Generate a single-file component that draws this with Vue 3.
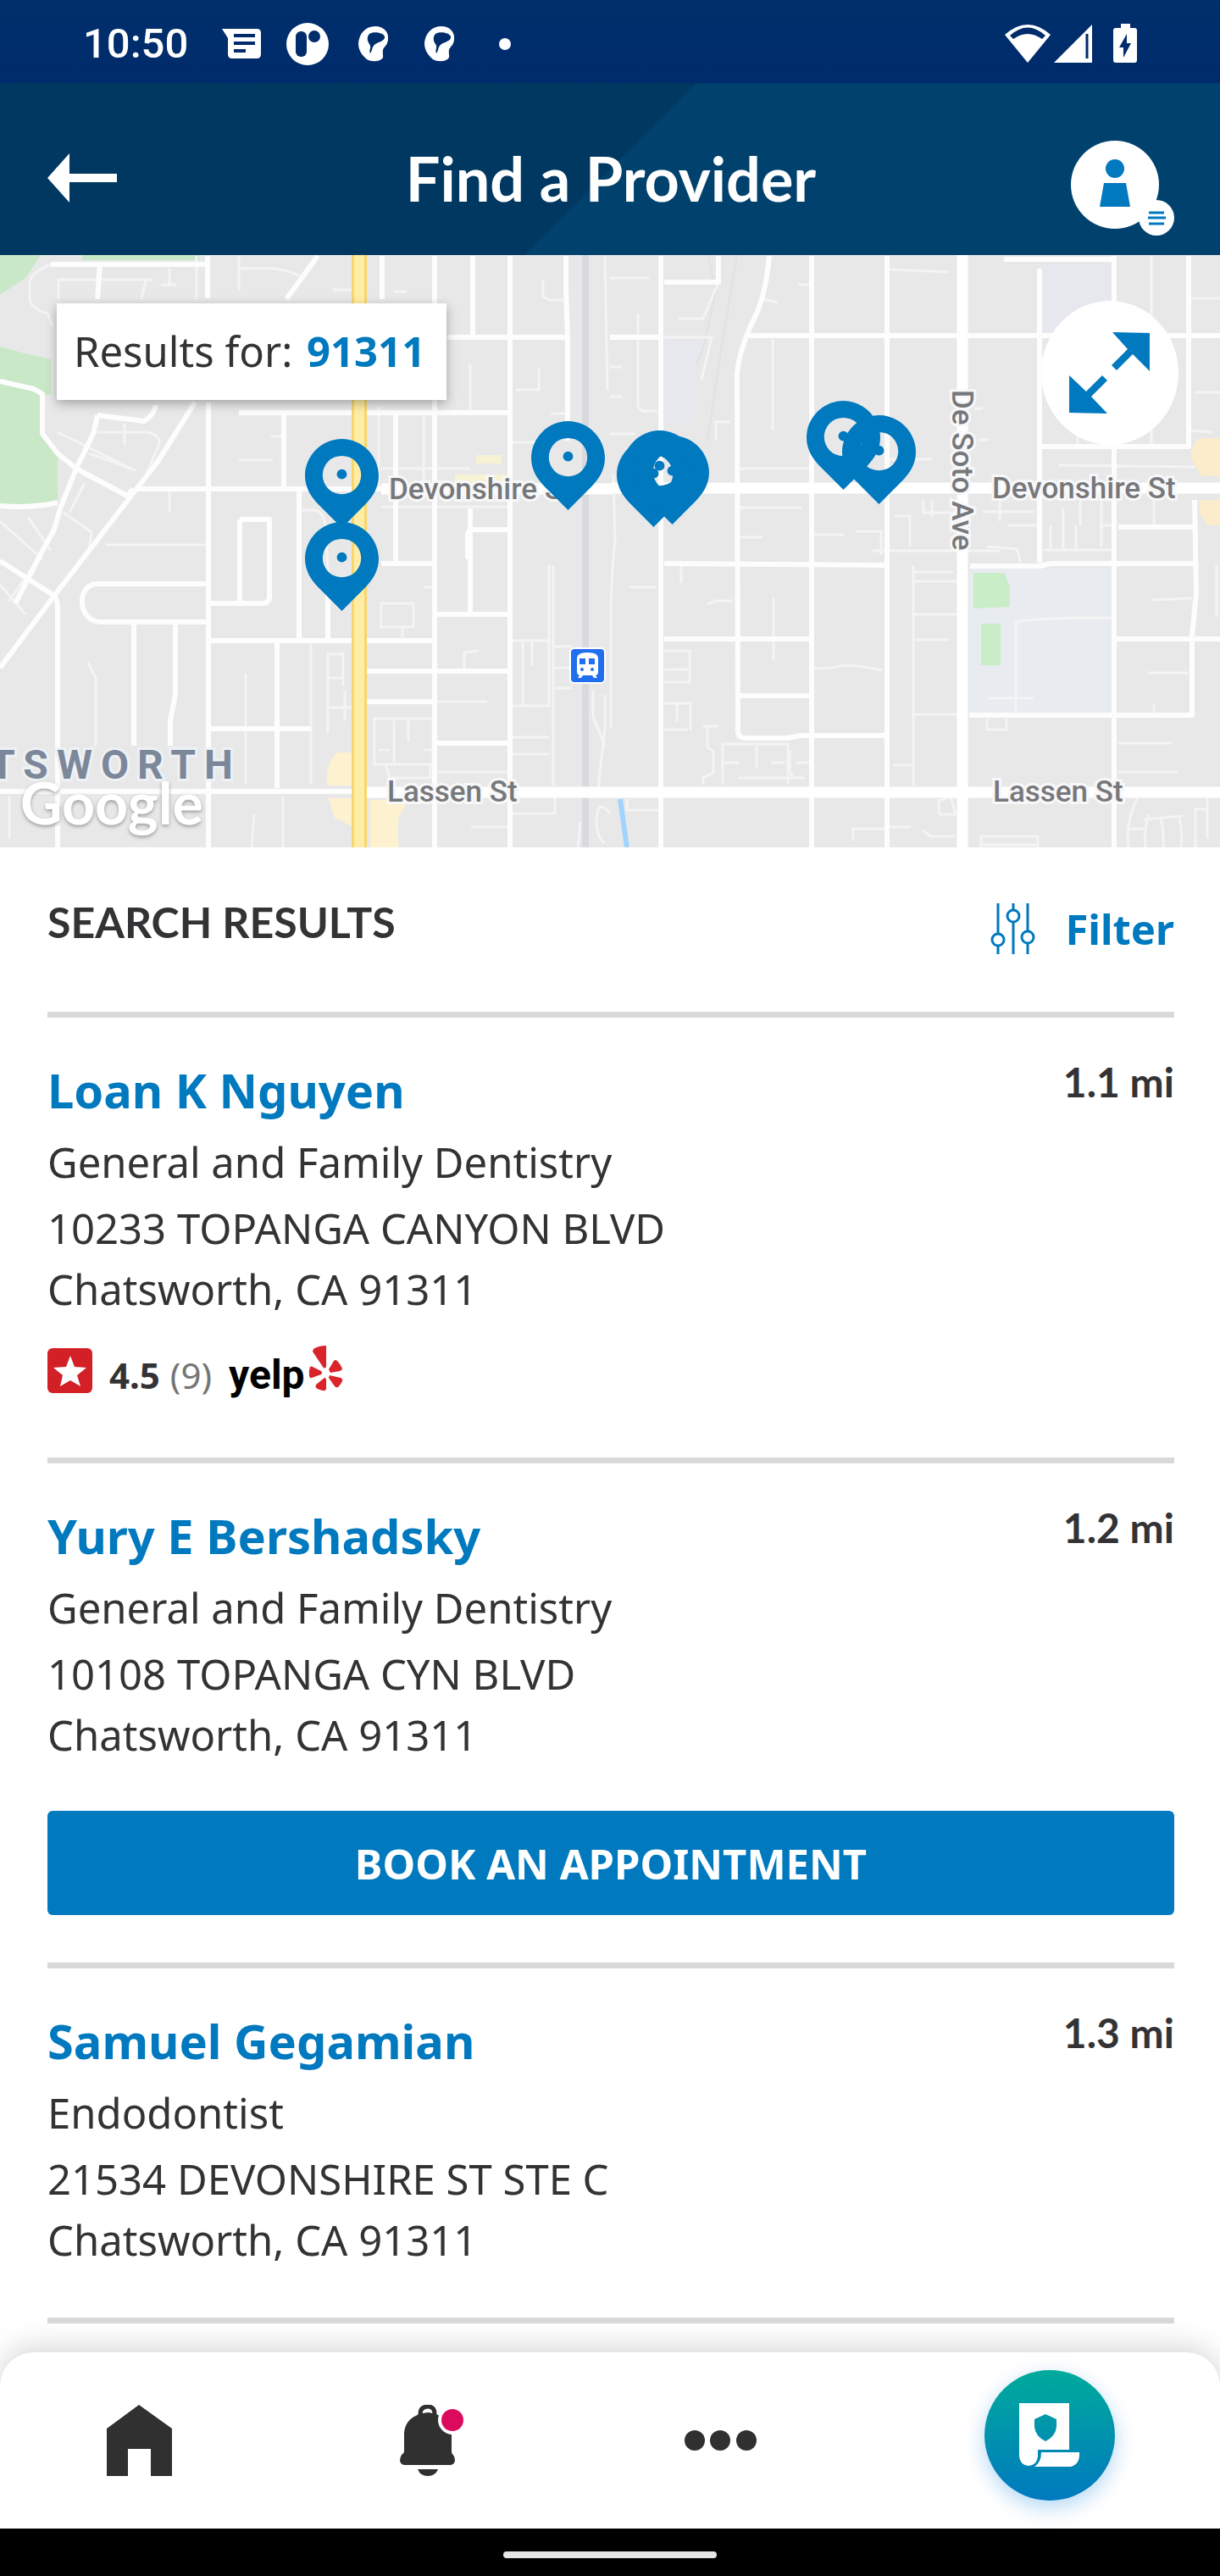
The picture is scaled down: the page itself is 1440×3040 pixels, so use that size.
<script setup>
import { ref } from 'vue'

const zip = ref('91311')

const providers = [
  {
    name: 'Loan K Nguyen',
    distance: '1.1 mi',
    specialty: 'General and Family Dentistry',
    street: '10233 TOPANGA CANYON BLVD',
    city: 'Chatsworth, CA 91311',
    rating: '4.5',
    reviews: 9,
  },
  {
    name: 'Yury E Bershadsky',
    distance: '1.2 mi',
    specialty: 'General and Family Dentistry',
    street: '10108 TOPANGA CYN BLVD',
    city: 'Chatsworth, CA 91311',
    bookable: true,
  },
  {
    name: 'Samuel Gegamian',
    distance: '1.3 mi',
    specialty: 'Endodontist',
    street: '21534 DEVONSHIRE ST STE C',
    city: 'Chatsworth, CA 91311',
  },
]

// Pin anchors: horizontal centre and top edge on the map canvas
const pins = [
  { x: 404, y: 217 },
  { x: 404, y: 315 },
  { x: 671, y: 196 },
  { x: 779, y: 207 },
  { x: 772, y: 216 },
  { x: 794, y: 213 },
  { x: 996, y: 172 },
  { x: 1038, y: 189 },
]
const pinStyle = (pin) => ({ left: `${(pin.x / 1440) * 100}%`, top: `${pin.y}px` })

const wideRoads = [
  'M450 577H722',
  'M720 576H1440',
  'M1136 301V1000',
  'M433 935H1440',
]

const roads = [
  'M245 302V352M246 475V1000M60 312H247',
  'M118 312L115 353M375 302L338 353M451 302V353',
  'M513 302V1000M558 302V398M602 302V1000M668 302V340L670 400V520',
  'M528 398H668M282 487H602M335 487V577M467 490V665',
  'M160 577H450M353 580V755M387 690V755',
  'M230 475L186 545L155 585L105 650L64 703L0 788',
  'M115 490L110 512L90 553L71 600L64 625L50 650L18 712',
  'M115 490L170 497Q182 490 184 478',
  'M0 450L40 459L50 465V512L68 535L90 553L150 585L157 577',
  'M0 597Q40 600 68 593M0 662L64 703Q68 708 68 720V1000',
  'M243 689H115C90 689 90 734 120 734H243',
  'M158 734V880M207 734V820L201 850V880',
  'M283 613H318V704Q318 712 310 712H248M283 613V712',
  'M246 756H513M327 757V930M246 860H367M0 934H415',
  'M450 665H513M433 792H602M433 828H513M513 725H602M513 877H602M555 600V725',
  'M552 660V632Q552 625 560 625H602',
  'M780 302V1000M848 302V333H784M720 398H780',
  'M908 302Q904 345 893 370Q873 410 870 440L871 862Q871 871 880 871H930L945 868H1048',
  'M880 396H1440M958 302V1000M1047 302V1000',
  'M1227 317V664M1315 302V1000M1185 306H1315M1403 302V527H1230',
  'M784 665L1045 667M1145 668H1228L1240 665H1410',
  'M1410 590L1412 700L1407 750V844H1144',
  'M784 754H957M873 821H957M1317 754H1440M1320 622H1410',
]

const lanes = [
  'M60 312Q35 322 35 335V355Q40 366 56 370L62 385',
  'M69 353V330H180M172 331L167 353M200 317V336M190 336H208M232 302V353',
  'M282 302V343M282 317H325Q345 320 353 326M393 342H415M465 344H480',
  'M641 330V350L648 354H665M714 302L717 460M609 460H636V435M555 430V487',
  'M68 510L155 553M115 510H175Q190 515 188 524L165 577M147 500V525M105 535L160 555',
  'M75 605L108 628L105 650M100 570L82 605M0 615L50 660M33 610L60 650M0 690L30 725M45 660L10 710',
  'M282 543H322M200 580V605M320 515H335M125 643H245M450 553H555M450 598H602',
  'M352 602H370Q382 603 384 620L388 690M447 480V577M500 490V577M605 522H640M650 488H668',
  'M104 782L113 800V880M290 795V925M367 757V925M300 960L297 1000M334 940V1000M11 940V990',
  'M387 772H405M387 800H405M405 770V810M387 770V865M387 835H415M407 815V850',
  'M450 712H488V740H450ZM475 740V752M500 693H510M548 792V770L565 768',
  'M442 848H511V902H442ZM465 848V900M482 848V875M447 885H460M500 885H510M455 902L460 918H508V902',
  'M605 756H650M648 667V833H605M653 667V927M617 756V833M628 756V785M655 763H675M655 788H672M655 812H675',
  'M513 828H575M605 870H648M605 890H648M513 911H602M556 976H600M605 960H655V940M685 970L682 1000',
  'M700 815V845L714 880M714 820V860L706 930M720 960Q705 940 704 970Q705 990 714 995',
  'M724 560L726 640Q722 670 721 720V860M784 398H840L828 448M753 370V480L758 485H776M720 328H766M720 433H734M720 468H734M720 512H750',
  'M848 333L830 376H800M897 352L918 357M912 400V508M845 520V498H862M942 336H958M1050 318L1120 321',
  'M1150 482H1160M1155 519H1167M872 553H957M1047 542H1100M1250 549L1410 551',
  'M872 599H947M962 631H997M872 634H900M1056 609H1074V645M1074 615V640M1010 627H1040V655M1030 650H1180',
  'M1090 590V605H1130M1100 590V610M1180 590V615M1160 604H1220M1190 620H1225M1255 600V650M1275 590V620M1300 580V645',
  'M1231 649H1312M1240 620V648M1270 620V648M1362 590V620M1298 620H1315M1406 352H1440M1359 302V525M1272 515V527M1410 463H1440M1406 508L1430 510',
  'M743 693H775M804 668V688M835 713L845 709H865M913 705V780M784 768H814V805H784M784 790H814',
  'M784 830H815V862M799 830V852M784 861H812M830 857H847M835 857V882L842 886V912L830 918V926',
  'M853 926V878H930V925M893 880V907M855 900H872M910 900H927M872 918H950M932 885V910L936 918M940 900H956',
  'M961 789L980 788Q1000 783 1020 787L1042 791M1078 667V927M1078 725H1130M1078 755H1120M1078 843H1130M1078 675H1125M1078 686H1130M1055 903H1078',
  'M1165 645L1200 648L1205 664M1199 840V735Q1210 729 1312 729M1165 824H1220M1165 848V861H1188V848',
  'M1360 708L1407 706M1355 794H1403M1320 877H1383M1320 911H1390M1436 667V728M1362 830V845',
  'M740 943V956H780M1007 992V978H1045M1050 976H1075M1090 980L1098 987H1128M1108 960V945L1122 940L1128 961H1108M1158 1000V987H1225V1000M1160 997H1224',
  'M1343 940Q1328 970 1332 1000M1356 960Q1350 980 1352 1000M1350 967L1396 963M1370 965Q1374 980 1373 1000M1392 965Q1396 980 1394 1000M1332 978H1350M1411 1000V955H1425M1425 940V990',
]

const streetLabels = [
  { text: 'Devonshire St', x: 459, y: 589 },
  { text: 'Devonshire St', x: 1171, y: 588 },
  { text: 'Lassen St', x: 457, y: 946 },
  { text: 'Lassen St', x: 1172, y: 946 },
]
</script>

<template>
  <div class="screen">
    <div class="status">
      <div class="status-left">
        <span class="time">10:50</span>
        <svg width="46" height="50" viewBox="0 0 46 50" aria-hidden="true">
          <path fill="#fff" d="M0 7H41Q46 7 46 12V37Q46 42 41 42H12Q7 42 7 37V18Z" />
          <path stroke="#002c6b" stroke-width="4" d="M14 15H39M14 24H39M14 33H28" />
        </svg>
        <svg width="50" height="50" viewBox="0 0 50 50" aria-hidden="true">
          <circle cx="25" cy="25" r="25" fill="#fff" />
          <rect x="11" y="10" width="13" height="30" rx="6" fill="#002c6b" />
          <circle cx="33" cy="16" r="7" fill="#002c6b" />
        </svg>
        <svg v-for="n in 2" :key="n" class="face" width="36" height="42" viewBox="0 0 36 42" aria-hidden="true">
          <path
            fill="#fff"
            fill-rule="evenodd"
            d="M20 0C30 0 36 7 35 15C35 22 30 24 29 28C28 33 31 37 27 39C23 42 15 42 10 39C4 34 0 28 0 20C1 9 8 0 20 0ZM13 9C10 12 10 17 13 21C16 25 12 28 14 32C17 29 15 25 20 21C25 18 32 17 31 12C29 7 17 6 13 9Z"
          />
        </svg>
        <svg class="more-dot" width="14" height="14" viewBox="0 0 14 14" aria-hidden="true">
          <circle cx="7" cy="7" r="7" fill="#fff" />
        </svg>
      </div>
      <svg width="158" height="48" viewBox="0 0 158 48" aria-hidden="true">
        <path fill="#fff" d="M27 46L0 13Q27-11 54 13Z" />
        <path fill="#002c6b" d="M6 14Q27-5 48 14L44 18Q27 6 10 18Z" />
        <path fill="#fff" d="M58 46L103 1V46Z" />
        <path stroke="#002c6b" stroke-width="3" d="M97 12V41" />
        <path fill="#fff" d="M137 0H148V5H153Q156 5 156 8V43Q156 46 153 46H131Q128 46 128 43V8Q128 5 131 5H137Z" />
        <path fill="#002c6b" d="M144 12L135 28H140V40L149 23H144Z" />
      </svg>
    </div>

    <header class="header">
      <button class="plain back" type="button" aria-label="Back">
        <svg width="82" height="58" viewBox="0 0 82 58"><path fill="#fff" d="M0 29L26 0V24H82V34H26V58Z" /></svg>
      </button>
      <h1>Find a Provider</h1>
      <button class="plain profile" type="button" aria-label="Profile menu">
        <svg width="122" height="112" viewBox="0 0 122 112">
          <circle cx="52" cy="52" r="52" fill="#fff" />
          <circle cx="52" cy="33" r="11" fill="#0079bf" />
          <path fill="#0079bf" d="M39 50H65L70 78H34Z" />
          <circle cx="101" cy="91" r="21" fill="#fff" />
          <path stroke="#0079bf" stroke-width="3" d="M92 85H110M91 91H112M92 98H110" />
        </svg>
      </button>
    </header>

    <section class="map" aria-label="Map of results">
      <svg class="map-art" viewBox="0 301 1440 699" preserveAspectRatio="xMidYMid slice">
        <defs>
          <filter id="logoShadow" x="-10%" y="-20%" width="120%" height="150%">
            <feDropShadow dx="0" dy="2" stdDeviation="2" flood-color="#777" flood-opacity="0.7" />
          </filter>
        </defs>
        <rect y="301" width="1440" height="699" fill="#e8e8e9" />
        <path fill="#c8e8c8" d="M0 301H48L30 328L0 348ZM97 301H235V307H97ZM0 409Q30 418 60 424V465L50 467V510L68 540V593L0 598Z" />
        <path fill="#e7e7ee" d="M1232 310H1312V395H1232ZM784 400H828L815 500H784Z" />
        <path fill="#e8ebf0" d="M1145 671H1313V841H1145Z" />
        <path fill="#c9edc6" d="M1149 676H1185L1192 692V716L1149 718ZM1158 736H1181V785H1158Z" />
        <path fill="#fbeccb" d="M1440 517H1415Q1402 530 1408 545L1418 562H1440ZM1440 590H1416V606L1426 620H1440Z" />
        <path fill="#fdf1cf" d="M415 888H398Q384 900 386 927H415ZM415 942H388L395 965L415 975ZM437 944H482L470 965V1000H437Z" />
        <path fill="#f6f2d4" d="M562 537H592V547H562ZM537 560H602V570H537Z" />
        <path stroke="#d8dade" stroke-width="8" d="M691 301V1000" />
        <path fill="none" stroke="#e0e1e3" stroke-width="2" d="M870 302L850 420L835 520M836 302L845 345L830 410L822 430" />
        <g fill="none" stroke="#f4f4f5" stroke-width="3">
          <path v-for="d in lanes" :key="d" :d="d" />
        </g>
        <g fill="none" stroke="#fdfdfe" stroke-width="6" stroke-linejoin="round">
          <path v-for="d in roads" :key="d" :d="d" />
        </g>
        <g fill="none" stroke="#fff" stroke-width="13">
          <path v-for="d in wideRoads" :key="d" :d="d" />
        </g>
        <path stroke="#f8d66c" stroke-width="18" d="M424 301V1000" />
        <path stroke="#ffeda6" stroke-width="12" d="M424 301V1000" />
        <path stroke="#a2d3ff" stroke-width="6" d="M732 943L740 1000" />

        <g class="street">
          <text v-for="label in streetLabels" :key="`${label.x}-${label.y}`" :x="label.x" :y="label.y">{{ label.text }}</text>
          <text transform="translate(1124 460) rotate(90)">De Soto Ave</text>
        </g>
        <text class="city" x="-12" y="919">TSWORTH</text>
        <text class="logo" x="24" y="973" filter="url(#logoShadow)">Google</text>

        <g>
          <rect x="672" y="764" width="43" height="43" rx="6" fill="#fff" />
          <rect x="674" y="766" width="39" height="39" rx="4" fill="#1f6fee" />
          <path fill="#fff" d="M681 777Q681 770 693 770Q706 770 706 777V793Q706 796 703 797L705 800H701L699 797H688L686 800H682L684 797Q681 796 681 793Z" />
          <path fill="#1f6fee" d="M684 777H691V784H684ZM695 777H702V784H695Z" />
          <circle cx="687" cy="790" r="2" fill="#1f6fee" />
          <circle cx="699" cy="790" r="2" fill="#1f6fee" />
        </g>
      </svg>

      <button
        v-for="(pin, i) in pins"
        :key="i"
        class="plain pin"
        type="button"
        :aria-label="`Provider location ${i + 1}`"
        :style="pinStyle(pin)"
      >
        <svg width="87" height="105" viewBox="0 0 88 106">
          <path
            fill="#0079bf"
            fill-rule="evenodd"
            d="M44 0C68 0 88 20 88 44C88 58 81 69 72 78L44 106L16 78C7 69 0 58 0 44C0 20 20 0 44 0ZM44 20A23 23 0 1 0 44 66A23 23 0 1 0 44 20Z"
          />
          <circle cx="44" cy="42" r="6" fill="#0079bf" />
        </svg>
      </button>

      <p class="results-for">Results for: <a href="#location">{{ zip }}</a></p>

      <button class="plain expand" type="button" aria-label="Expand map">
        <svg width="96" height="96" viewBox="0 0 96 96">
          <path fill="#0079bf" d="M51 0L95 1V46L75 26L56 45L50 39L69 20ZM0 51L20 70L39 51L45 57L26 76L45 96L0 95Z" />
        </svg>
      </button>
    </section>

    <main class="results">
      <div class="results-head">
        <h2>SEARCH RESULTS</h2>
        <button class="plain filter" type="button">
          <svg width="54" height="60" viewBox="0 0 54 60" aria-hidden="true">
            <g fill="none" stroke="#0079bf" stroke-width="3">
              <path d="M9 0V36M9 51V60M27 0V8M27 23V60M44 0V33M44 48V60" />
              <circle cx="9" cy="43" r="7" />
              <circle cx="27" cy="15" r="7" />
              <circle cx="44" cy="40" r="7" />
            </g>
          </svg>
          <span>Filter</span>
        </button>
      </div>

      <article v-for="p in providers" :key="p.name" class="provider">
        <div class="provider-head">
          <h3><a href="#provider">{{ p.name }}</a></h3>
          <span class="distance">{{ p.distance }}</span>
        </div>
        <p class="specialty">{{ p.specialty }}</p>
        <p>{{ p.street }}</p>
        <p>{{ p.city }}</p>
        <div v-if="p.rating" class="rating">
          <svg width="53" height="53" viewBox="0 0 53 53" aria-hidden="true">
            <rect width="53" height="53" rx="6" fill="#d32027" />
            <path fill="#fff" d="M27 9L32 22L46 23L35 32L39 45L27 38L15 45L18 32L7 23L22 22Z" />
          </svg>
          <strong>{{ p.rating }}</strong>
          <span class="count">({{ p.reviews }})</span>
          <span class="yelp">yelp</span>
          <svg class="burst" width="41" height="54" viewBox="0 0 41 54" aria-hidden="true">
            <g fill="#d9242b">
              <path d="M6 4Q12 0 21 0V25Q19 28 17 25L5 7Z" />
              <path d="M24 28L30 18Q32 16 34 18Q38 22 40 27Q40 29 37 30L26 32Z" />
              <path d="M25 35L38 38Q41 39 40 42Q38 46 35 49Q33 50 31 48L24 38Z" />
              <path d="M19 38Q21 38 21 40V51Q20 54 17 53Q12 52 9 50Q8 48 9 46Z" />
              <path d="M2 25Q0 30 1 36Q2 39 4 38L15 34Q17 32 15 30L5 25Q3 24 2 25Z" />
            </g>
          </svg>
        </div>
        <button v-if="p.bookable" class="book" type="button">BOOK AN APPOINTMENT</button>
      </article>
    </main>

    <nav class="tabs" aria-label="Main">
      <a href="#home" aria-label="Home">
        <svg width="77" height="84" viewBox="0 0 77 84"><path fill="#303030" d="M0 28L38 0L77 28V84H52V52H25V84H0Z" /></svg>
      </a>
      <a href="#alerts" aria-label="Notifications">
        <svg width="83" height="84" viewBox="-8 0 83 84">
          <path fill="none" stroke="#303030" stroke-width="5" d="M24 14V11Q24 2 33 2Q41 2 41 11V14" />
          <path fill="#303030" d="M33 9C15 11 5 20 5 36V55Q5 57 2 59Q0 62 0 66Q1 71 6 71H60Q65 70 65 65Q65 61 62 58Q61 57 61 55V36C61 20 51 11 33 9Z" />
          <path fill="#303030" d="M21 76H45Q42 84 33 84Q24 84 21 76Z" />
          <circle cx="62" cy="18" r="17" fill="#fff" />
          <circle cx="62" cy="18" r="13" fill="#dc0a5d" />
        </svg>
      </a>
      <a href="#more" aria-label="More">
        <svg width="93" height="24" viewBox="0 0 93 24">
          <g fill="#303030"><circle cx="12" cy="12" r="12" /><circle cx="42" cy="12" r="12" /><circle cx="73" cy="12" r="12" /></g>
        </svg>
      </a>
      <a class="plan" href="#plan" aria-label="My plan">
        <svg width="72" height="76" viewBox="0 0 72 76">
          <path fill="#fff" fill-rule="evenodd" d="M0 0H59V55H22V63Q21 73 11 74Q1 73 0 63ZM31 13L18 19V28Q19 39 31 45Q43 39 44 28V19Z" />
          <path fill="#fff" d="M26 58H71Q72 72 61 75H18Q26 70 26 58Z" />
        </svg>
      </a>
    </nav>
    <div class="gesture"><span></span></div>
  </div>
</template>

<style>
body {
  margin: 0;
}
</style>

<style scoped>
* {
  box-sizing: border-box;
}
.screen {
  min-height: 100vh;
  display: flex;
  flex-direction: column;
  overflow: hidden;
  background: #fff;
  color: #333335;
  font-family: "Noto Sans", sans-serif;
  font-size: 49px;
  line-height: 72px;
}
h1,
h2,
h3,
p {
  margin: 0;
}
a {
  color: #0079bf;
  text-decoration: none;
}
svg {
  display: block;
  flex: none;
}
.plain {
  border: 0;
  padding: 0;
  background: none;
  color: inherit;
  font: inherit;
  cursor: pointer;
}

.status {
  height: 98px;
  padding: 6px 96px 0 98px;
  display: flex;
  align-items: center;
  justify-content: space-between;
  background: linear-gradient(#002f6b, #002b6c);
  color: #fff;
}
.status-left {
  display: flex;
  align-items: center;
}
.time {
  margin-right: 40px;
  font-family: Roboto, sans-serif;
  font-weight: 500;
}
.status-left svg + svg {
  margin-left: 30px;
}
.status-left svg + .face {
  margin-left: 35px;
}
.status-left .face + .face {
  margin-left: 42px;
}
.status-left .face + .more-dot {
  margin-left: 52px;
}

.header {
  height: 203px;
  padding: 20px 54px 0 56px;
  display: grid;
  grid-template-columns: 1fr auto 1fr;
  align-items: center;
  background: linear-gradient(135deg, #003861 50%, #00416d 50%);
  color: #fff;
}
.header h1 {
  font-family: Lato, sans-serif;
  font-size: 72px;
  line-height: 84px;
  font-weight: 700;
}
.back {
  justify-self: start;
}
.profile {
  justify-self: end;
  padding-top: 24px;
}

.map {
  position: relative;
  height: 699px;
  overflow: hidden;
}
.map-art {
  width: 100%;
  height: 100%;
}
.street text {
  font-family: Roboto, sans-serif;
  font-size: 35px;
  font-weight: 500;
  fill: #77787b;
  stroke: #f8f8f9;
  stroke-width: 6px;
  paint-order: stroke;
}
.city {
  font-family: Roboto, sans-serif;
  font-size: 48px;
  font-weight: 700;
  letter-spacing: 10px;
  fill: #7c889a;
  stroke: #eef1f5;
  stroke-width: 6px;
  paint-order: stroke;
}
.logo {
  font-family: Lato, sans-serif;
  font-size: 68px;
  font-weight: 700;
  fill: #fff;
}
.pin {
  position: absolute;
  margin-left: -44px;
}
.results-for {
  position: absolute;
  top: 57px;
  left: 67px;
  padding: 20px 25px 22px 20px;
  background: #fff;
  box-shadow: 0 4px 12px rgba(0, 0, 0, 0.3);
  white-space: nowrap;
}
.results-for a {
  margin-left: 4px;
  font-weight: 700;
}
.expand {
  position: absolute;
  top: 54px;
  right: 49px;
  width: 162px;
  height: 170px;
  border-radius: 50%;
  background: #fff;
  display: flex;
  align-items: center;
  justify-content: center;
}

.results {
  flex: 1;
  padding: 0 54px 0 56px;
}
.results-head {
  padding: 52px 0 62px;
  display: flex;
  align-items: flex-start;
  justify-content: space-between;
}
.results-head h2 {
  font-family: Lato, sans-serif;
  font-size: 50px;
  font-weight: 700;
}
.filter {
  margin-top: 8px;
  display: flex;
  align-items: center;
  gap: 34px;
  color: #0079bf;
  font-weight: 700;
}
.provider {
  border-top: 7px solid #d9d9d9;
  padding: 47px 0 56px;
}
.provider:last-child {
  border-bottom: 7px solid #d9d9d9;
}
.provider-head {
  display: flex;
  align-items: flex-start;
  justify-content: space-between;
}
.provider h3 {
  font-size: 56px;
  line-height: 76px;
  font-weight: 700;
}
.distance {
  font-family: Lato, sans-serif;
  font-size: 48px;
  font-weight: 700;
  line-height: 58px;
}
.specialty {
  margin: 11px 0 6px;
}
.rating {
  height: 53px;
  margin: 34px 0 20px;
  display: flex;
  align-items: center;
  font-size: 42px;
}
.rating strong {
  margin: 10px 12px 0 20px;
}
.rating .count {
  margin: 10px 20px 0 0;
  color: #757575;
}
.yelp {
  margin: 10px 4px 0 0;
  color: #000;
  font-family: Roboto, sans-serif;
  font-size: 48px;
  font-weight: 700;
}
.burst {
  margin-bottom: 6px;
}
.book {
  display: block;
  width: 100%;
  height: 123px;
  margin-top: 54px;
  border: 0;
  border-radius: 6px;
  background: #0079bf;
  color: #fff;
  font: inherit;
  font-weight: 700;
  cursor: pointer;
}

.tabs {
  position: relative;
  height: 208px;
  padding: 0 124px 0 126px;
  display: flex;
  align-items: center;
  justify-content: space-between;
  border-radius: 40px 40px 0 0;
  background: #fff;
  box-shadow: 0 -4px 36px rgba(0, 0, 0, 0.18);
}
.plan {
  width: 154px;
  height: 154px;
  margin-bottom: 12px;
  display: flex;
  align-items: center;
  justify-content: center;
  border-radius: 50%;
  background: linear-gradient(#00ab9b, #0079bf);
  box-shadow: 0 8px 24px rgba(0, 121, 220, 0.3);
}
.gesture {
  position: relative;
  height: 56px;
  display: flex;
  align-items: center;
  justify-content: center;
  background: #000;
}
.gesture span {
  width: 252px;
  height: 8px;
  margin-top: 6px;
  border-radius: 4px;
  background: #e6e6e6;
}
</style>
